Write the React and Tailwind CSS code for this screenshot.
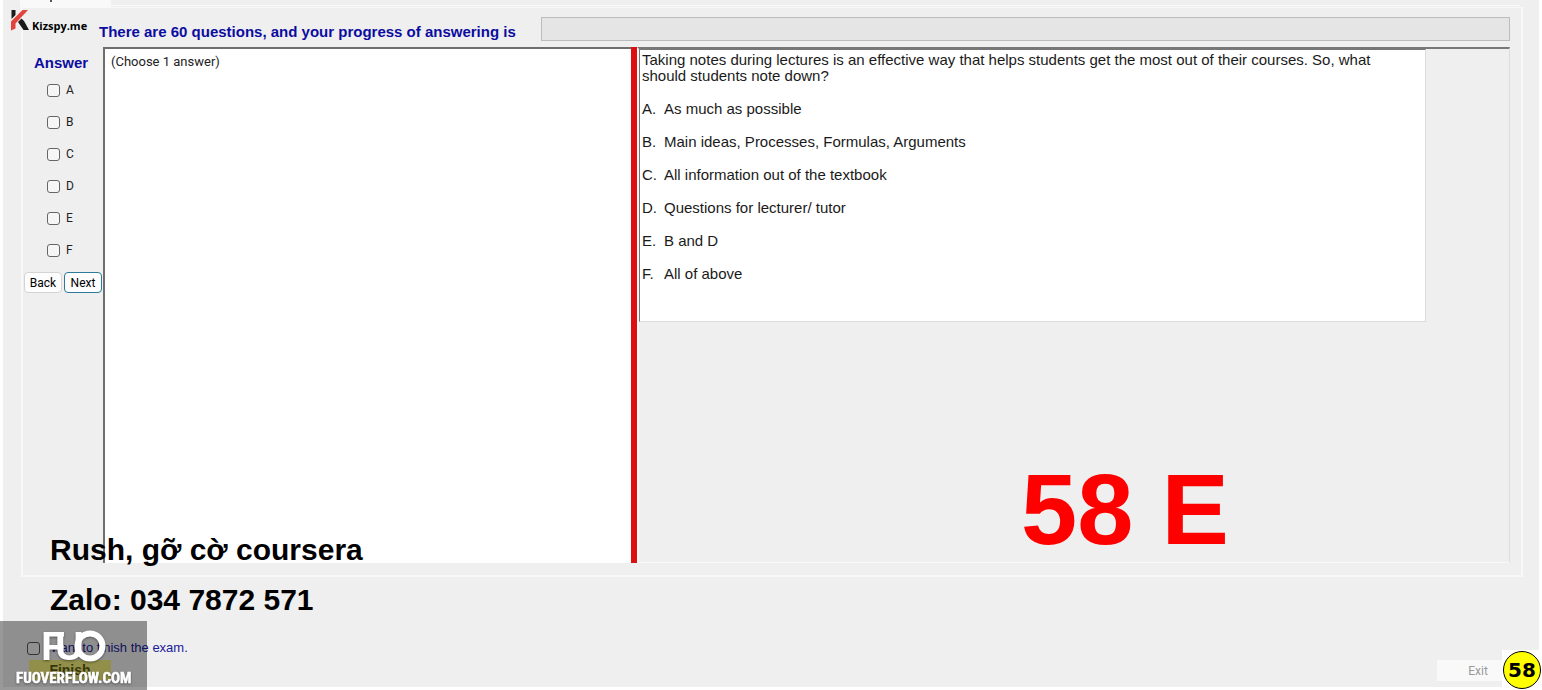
const choices = ["A", "B", "C", "D", "E", "F"];

const options = [
  ["A.", "As much as possible"],
  ["B.", "Main ideas, Processes, Formulas, Arguments"],
  ["C.", "All information out of the textbook"],
  ["D.", "Questions for lecturer/ tutor"],
  ["E.", "B and D"],
  ["F.", "All of above"],
];

function KizspyLogo() {
  return (
    <div className="absolute left-[10px] top-[9px] flex items-start">
      <svg width="19" height="22" viewBox="0 0 19 22" aria-hidden="true">
        <path d="M1.5 1H5.5V6L1.5 10Z" fill="#1a1a1a" />
        <path d="M12.500 1H18L5.500 14.500V19.500L1 21.500V12.500Z" fill="#e2443c" />
        <path d="M8 13L11.500 9.500L14 12L19 21H13.500Z" fill="#1a1a1a" />
      </svg>
      <span className="mt-[10px] ml-[3px] font-['Open_Sans',sans-serif] text-[11px] leading-[14px] font-bold text-black">
        Kizspy.me
      </span>
    </div>
  );
}

function FuoBadge() {
  return (
    <div className="absolute bottom-0 left-0 h-[69px] w-[147px] bg-black/40">
      <svg width="147" height="69" viewBox="0 0 147 69" role="img" aria-label="FUO fuoverflow.com" className="[filter:drop-shadow(0_1px_1px_rgba(0,0,0,0.4))]">
        <g fill="#fff" fontFamily="Liberation Sans, sans-serif" fontWeight="bold" fontSize="40">
          <text x="41" y="39">F</text>
          <text x="55" y="39">U</text>
        </g>
        <circle cx="90" cy="25" r="12.5" fill="none" stroke="#fff" strokeWidth="6" />
        <text x="16" y="62" fill="#fff" fontFamily="Liberation Sans Narrow, Roboto Condensed, sans-serif" fontWeight="bold" fontSize="15" stroke="#fff" strokeWidth="0.5">
          FUOVERFLOW.COM
        </text>
      </svg>
    </div>
  );
}

export default function App() {
  return (
    <div className="relative overflow-hidden bg-white px-[3px] pb-[3px] font-['Liberation_Sans',sans-serif]">
      <div className="flex min-h-[687px] flex-col bg-[#efefef]">
        <div className="flex h-[7px]">
          <div className="ml-[17px] w-[91px] bg-[#f9f9f9]" />
          <div className="mt-[5px] mr-[19px] h-px flex-1 bg-[#fafafa]" />
        </div>

        <section className="mr-[16px] ml-[18px] border-2 border-t border-[#f8f8f8] pr-[11px] pb-[12px]">
          <header className="flex h-[39px] items-start">
            <h1 className="mt-[15px] ml-[76px] w-[442px] shrink-0 text-[15px] leading-[18px] font-bold whitespace-nowrap text-[#0c0ca0]">
              There are 60 questions, and your progress of answering is
            </h1>
            <div role="progressbar" aria-label="Progress" className="mt-[9px] h-[24px] flex-1 border border-[#bcbcbc] bg-[#e5e5e5]" />
          </header>

          <div className="flex h-[516px]">
            <form className="flex w-[80px] shrink-0 flex-col pt-[7px]">
              <fieldset className="flex flex-col">
                <legend className="mb-[2px] ml-[11px] text-[15px] leading-[18px] font-bold text-[#0c0ca0]">Answer</legend>
                {choices.map((c) => (
                  <label key={c} className="ml-[24px] flex h-[32px] items-center gap-[6px] font-['Roboto',sans-serif] text-[12px] text-[#222]">
                    <input type="checkbox" name="answer" value={c} className="size-[13px] appearance-none rounded-[3px] border border-[#666] bg-[#f6f6f6] checked:bg-[#0c6a9c]" />
                    {c}
                  </label>
                ))}
              </fieldset>
              <div className="mt-[6px] ml-px flex gap-[2px] font-['Roboto',sans-serif] text-[12px] text-black">
                <button type="button" className="h-[21px] w-[38px] rounded-[4px] border border-[#d4d4d4] bg-[#fdfdfd]">Back</button>
                <button type="button" className="h-[21px] w-[38px] rounded-[4px] border border-[#2b7a9b] bg-[#fdfdfd]">Next</button>
              </div>
            </form>

            <div className="w-[528px] shrink-0 border-t-2 border-l-2 border-[#6e6e6e] bg-white pt-[5px] pl-[6px] font-['Roboto',sans-serif] text-[13px] leading-[16px] text-[#222]">
              (Choose 1 answer)
            </div>
            <div className="w-[6px] shrink-0 bg-[#dc1010]" />
            <div className="min-w-0 flex-1 border border-t-2 border-l-2 border-[#f8f8f8] border-t-[#777] border-r-[#dcdcdc]">
              <article className="mr-[83px] h-[273px] border-t border-r border-b border-l border-[#dcdcdc] border-t-[#777] border-l-[#777] bg-white pt-[2px] pl-[2px] text-[15px] leading-[16px] text-[#1a1a1a]">
                <p className="mb-[17px] max-w-[740px]">
                  Taking notes during lectures is an effective way that helps students get the most out of their courses. So, what should students note down?
                </p>
                <ul>
                  {options.map(([k, t]) => (
                    <li key={k} className="flex h-[33px]">
                      <span className="w-[22px]">{k}</span>
                      <span>{t}</span>
                    </li>
                  ))}
                </ul>
              </article>
            </div>
          </div>
        </section>

        <footer className="flex flex-1 justify-between">
          <div className="mt-[61px] ml-[24px]">
            <label className="flex items-center gap-[4px] text-[13px] leading-[20px] text-[#1a1a9a]">
              <input type="checkbox" name="finish" className="size-[13px] appearance-none rounded-[3px] border border-[#555] bg-[#f0f0f0] checked:bg-[#0c6a9c]" />
              I want to finish the exam.
            </label>
            <button type="button" className="mt-[2px] ml-[2px] h-[20px] w-[82px] bg-[#f2ee7c] text-[14px] leading-[20px] font-bold text-[#5c5a10]">
              Finish
            </button>
          </div>
          <button type="button" disabled className="mt-auto mr-[20px] mb-[6px] h-[21px] w-[82px] bg-[#f9f9f9] font-['Roboto',sans-serif] text-[12px] text-[#999]">
            Exit
          </button>
        </footer>
      </div>

      <div className="absolute top-0 left-[50px] size-[2px] bg-[#555]" />
      <KizspyLogo />
      <p className="absolute top-[453px] left-[1021px] text-[101px] leading-[112px] font-bold whitespace-pre text-[#ff0000]">58 E</p>
      <div className="absolute top-[525px] left-[50px] text-[30px] leading-[50px] font-bold text-black">
        <p>Rush, gỡ cờ coursera</p>
        <p>Zalo: 034 7872 571</p>
      </div>
      <FuoBadge />
      <div className="absolute right-0 bottom-0 flex size-[40px] items-center justify-center bg-white">
        <span className="flex size-[38px] items-center justify-center rounded-full border border-black bg-[#ffff00] font-['DejaVu_Sans',sans-serif] text-[20px] font-bold text-black">
          58
        </span>
      </div>
    </div>
  );
}
